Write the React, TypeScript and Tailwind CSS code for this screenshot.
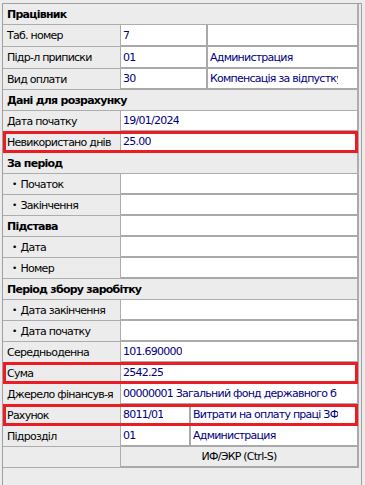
import React from "react";

type Cell = { text?: string; w?: number; clip?: number };

function Mark() {
  return (
    <div className="pointer-events-none absolute -top-px bottom-0 left-0 right-[1px] border-[3px] border-[#ec1c24]" />
  );
}

function Header({ title }: { title: string }) {
  return (
    <div className="flex h-[21px] items-center border-b border-r-2 border-[#adadad] pl-1 font-bold">
      {title}
    </div>
  );
}

function Label({ text, bullet }: { text?: string; bullet?: boolean }) {
  return (
    <div
      className={`flex w-[118px] shrink-0 items-center border-b border-r border-[#adadad] ${
        bullet ? "pl-[9px]" : "pl-1"
      }`}
    >
      {bullet && <span className="mr-[4px] text-[9px]">•</span>}
      {text}
    </div>
  );
}

function Value({ text, w, clip }: Cell) {
  return (
    <div
      className={`flex items-center border-b-2 border-r-2 border-[#a9a9a9] bg-white pl-[2px] text-[#000080] ${
        w ? "shrink-0" : "flex-1"
      }`}
      style={w ? { width: w } : undefined}
    >
      <div
        className="overflow-hidden whitespace-nowrap"
        style={clip ? { width: clip } : undefined}
      >
        {text}
      </div>
    </div>
  );
}

function Row({
  label,
  bullet,
  bold,
  cells = [{}],
  h = 21,
  marked,
}: {
  label?: string;
  bullet?: boolean;
  bold?: boolean;
  cells?: Cell[];
  h?: number;
  marked?: boolean;
}) {
  return (
    <div className="relative flex" style={{ height: h }}>
      {bold ? (
        <div className="flex w-[118px] shrink-0 items-center border-b border-r border-[#adadad] pl-1 font-bold">
          {label}
        </div>
      ) : (
        <Label text={label} bullet={bullet} />
      )}
      {cells.map((c, i) => (
        <Value key={i} {...c} />
      ))}
      {marked && <Mark />}
    </div>
  );
}

export default function App() {
  return (
    <div className="h-[485px] w-[365px] overflow-hidden bg-[#ececec] pt-[3px] font-['DejaVu_Sans',Tahoma,sans-serif] text-[11px] leading-none tracking-[-0.75px] text-black">
      <div className="ml-[2px] h-[490px] w-[360px] border-l border-r border-t border-[#a0a0a0] bg-[#ececec]">
        <div className="w-[356px]">
          <Header title="Працівник" />
          <Row label="Таб. номер" h={22} cells={[{ text: "7", w: 87 }, {}]} />
          <Row
            label="Підр-л приписки"
            h={22}
            cells={[{ text: "01", w: 87 }, { text: "Администрация" }]}
          />
          <Row
            label="Вид оплати"
            cells={[{ text: "30", w: 87 }, { text: "Компенсація за відпустку", clip: 128 }]}
          />
          <Header title="Дані для розрахунку" />
          <Row label="Дата початку" cells={[{ text: "19/01/2024" }]} />
          <Row label="Невикористано днів" cells={[{ text: "25.00" }]} marked />
          <Header title="За період" />
          <Row label="Початок" bullet />
          <Row label="Закінчення" bullet />
          <Row label="Підстава" bold />
          <Row label="Дата" bullet />
          <Row label="Номер" bullet />
          <Header title="Період збору заробітку" />
          <Row label="Дата закінчення" bullet />
          <Row label="Дата початку" bullet />
          <Row label="Середньоденна" cells={[{ text: "101.690000" }]} />
          <Row label="Сума" cells={[{ text: "2542.25" }]} marked />
          <Row
            label="Джерело фінансув-я"
            cells={[{ text: "00000001 Загальний фонд державного бюджету", clip: 214 }]}
          />
          <Row
            label="Рахунок"
            cells={[{ text: "8011/01", w: 70 }, { text: "Витрати на оплату праці ЗФ" }]}
            marked
          />
          <Row
            label="Підрозділ"
            cells={[{ text: "01", w: 70 }, { text: "Администрация" }]}
          />
          <div className="flex h-[21px]">
            <Label />
            <div className="flex flex-1 items-center justify-center border-b-2 border-r-2 border-[#a9a9a9]">
              ИФ/ЭКР (Ctrl-S)
            </div>
          </div>
        </div>
      </div>
    </div>
  );
}
